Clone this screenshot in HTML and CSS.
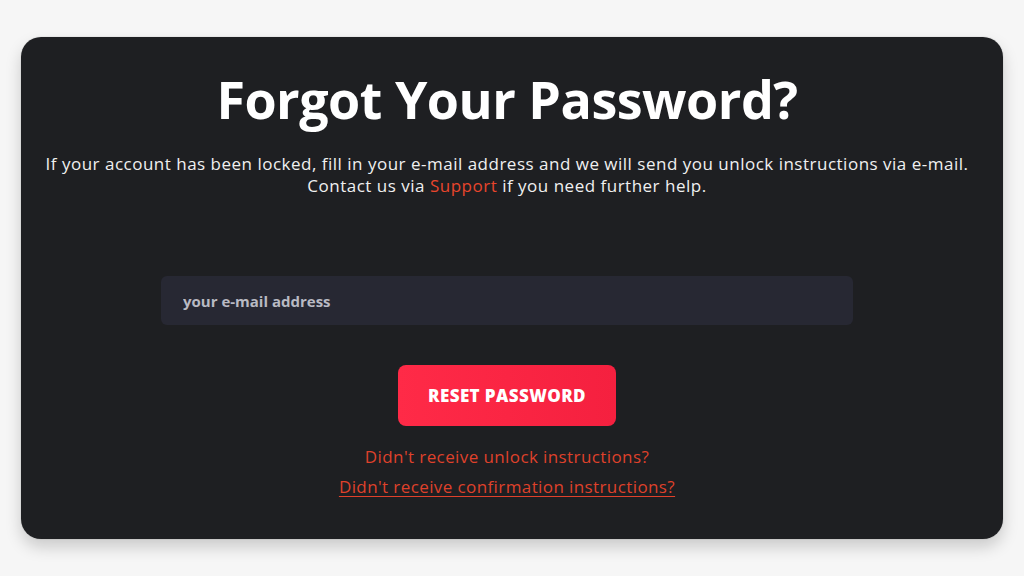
FILE: index.html
```html
<!DOCTYPE html>
<html>
<head>
    <title>Forgot Your Password?</title>
    <link rel="stylesheet" href="styles.css">
</head>
<body>
    <div class="card">
        <h1>Forgot Your Password?</h1>
        <p class="intro">
            If your account has been locked, fill in your e-mail address and we will send you unlock instructions via e-mail.<br>
            Contact us via <a href="#" class="support">Support</a> if you need further help.
        </p>
        <form class="reset-form">
            <input type="text" class="email" placeholder="your e-mail address">
            <button type="button" class="reset-btn">RESET PASSWORD</button>
        </form>
        <div class="links">
            <a href="#" class="unlock">Didn't receive unlock instructions?</a>
            <a href="#" class="confirm">Didn't receive confirmation instructions?</a>
        </div>
    </div>
</body>
</html>
```

FILE: styles.css
```css
html, body {
    height: 100%;
}
body {
    font-family: "Open Sans", "Noto Sans", sans-serif;
    margin: 0;
    padding: 37px 21px;
    box-sizing: border-box;
    background-color: #f6f6f6;
}
.card {
    height: 502px;
    background: #1e1f22;
    border-radius: 20px;
    box-shadow: 0 8px 16px rgba(0, 0, 0, 0.18), 0 0 0 1px rgba(0, 0, 0, 0.04);
    padding: 30px 10px 0 0;
    box-sizing: border-box;
    text-align: center;
    color: #fff;
}
h1 {
    margin: 0;
    font-size: 52px;
    line-height: 64px;
    font-weight: 700;
    letter-spacing: -0.5px;
}
.intro {
    margin: 22px 0 0;
    font-size: 17px;
    line-height: 22px;
    letter-spacing: 0.5px;
    color: #f0f0f0;
}
.support {
    color: #e8452c;
    text-decoration: none;
}
.reset-form {
    display: flex;
    flex-direction: column;
    align-items: center;
    margin-top: 79px;
}
.email {
    width: 692px;
    height: 49px;
    padding: 0 22px;
    box-sizing: border-box;
    background: #272833;
    border: none;
    border-radius: 6px;
    font-family: inherit;
    font-size: 15px;
    font-weight: 700;
    color: #fff;
    outline: none;
}
.email::placeholder {
    color: #b9bac3;
}
.reset-btn {
    margin-top: 40px;
    width: 218px;
    height: 61px;
    border: none;
    border-radius: 8px;
    background: linear-gradient(90deg, #ff2a47, #f5203f);
    color: #fff;
    font-family: inherit;
    font-size: 17px;
    font-weight: 800;
    letter-spacing: 0.4px;
    cursor: pointer;
}
.links {
    display: flex;
    flex-direction: column;
    align-items: center;
    gap: 8px;
    margin-top: 20px;
}
.links a {
    color: #df412b;
    font-size: 17px;
    line-height: 22px;
    letter-spacing: 0.4px;
    text-decoration: none;
}
.links .confirm {
    text-decoration: underline;
    text-underline-offset: 3px;
}
```
